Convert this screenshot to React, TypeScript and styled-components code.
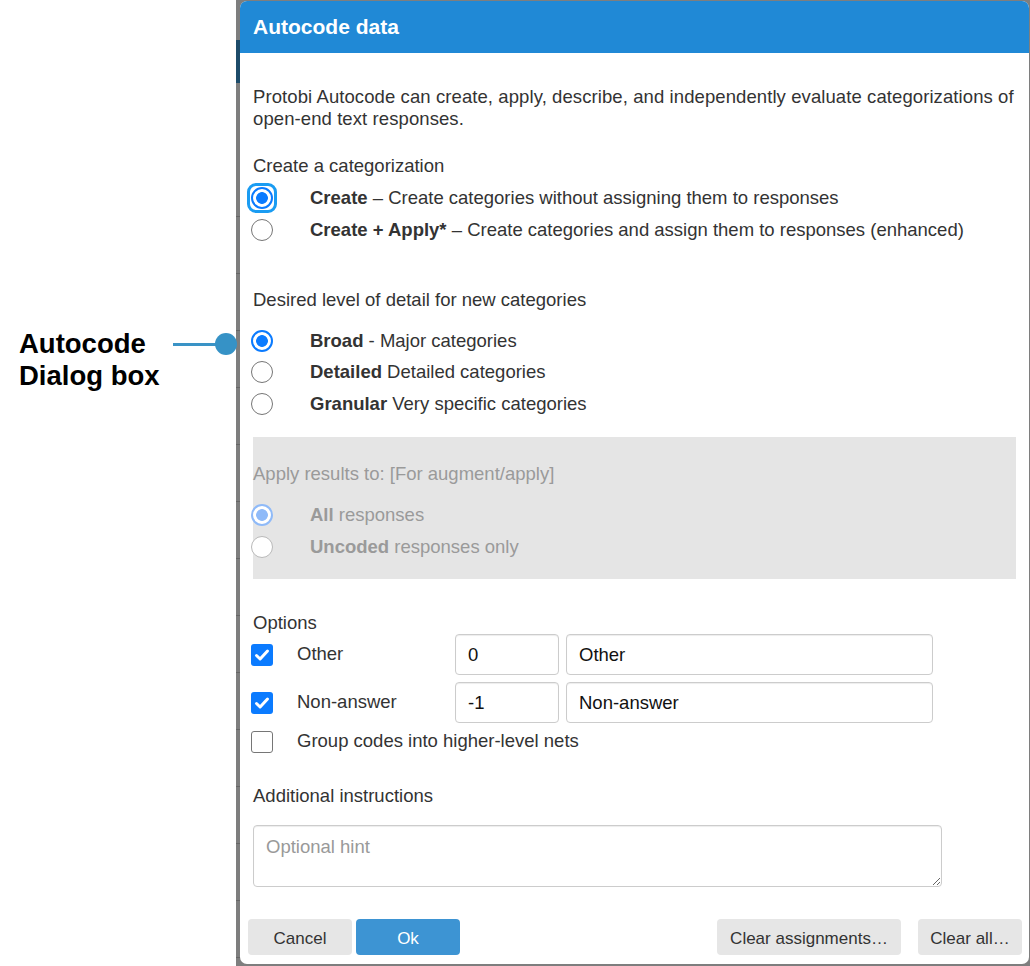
import React from 'react'
import styled, { createGlobalStyle, css } from 'styled-components'

const GlobalStyle = createGlobalStyle`
  html, body {
    margin: 0;
    padding: 0;
    background: #fff;
  }
  body {
    font-family: "Liberation Sans", Arial, Helvetica, sans-serif;
    color: #333;
  }
`

const blue = '#0b7bff'
const paleBlue = '#8fbaf8'

const Page = styled.div`
  display: flex;
  width: 1030px;
  height: 966px;
  overflow: hidden;
`

const AnnotationColumn = styled.div`
  position: relative;
  z-index: 2;
  flex: none;
  width: 236px;
  padding: 328px 0 0 19px;
  box-sizing: border-box;
`

const Callout = styled.div`
  display: flex;
  align-items: flex-start;
`

const CalloutText = styled.div`
  width: 154px;
  flex: none;
  font-size: 27.5px;
  line-height: 32px;
  font-weight: 700;
  color: #000;
`

const Leader = styled.div`
  display: flex;
  align-items: center;
  height: 32px;
`

const LeaderLine = styled.span`
  width: 45px;
  height: 3px;
  background: #3a93c6;
`

const LeaderDot = styled.span`
  width: 22px;
  height: 22px;
  margin-left: -3px;
  border-radius: 50%;
  background: #3692c6;
`

/* the app behind the modal, dimmed */
const Backdrop = styled.div`
  flex: 1;
  display: flex;
  padding: 1px 1px 0 4px;
  background:
    linear-gradient(#1d4c6a, #1d4c6a) 0 40px / 4px 43px no-repeat,
    repeating-linear-gradient(
      to bottom,
      transparent 0 56px,
      #666 56px 57px
    ) 0 160px / 4px 100% no-repeat,
    #7e7e7e;
`

const Dialog = styled.div`
  width: 789px;
  height: 963px;
  display: flex;
  flex-direction: column;
  background: #fff;
  border-radius: 7px;
  overflow: hidden;
`

const Header = styled.div`
  height: 52px;
  flex: none;
  display: flex;
  align-items: center;
  padding: 0 13px;
  background: #2089d6;
  color: #fff;
  font-size: 21px;
  font-weight: 700;
`

const Body = styled.div`
  padding: 33px 13px 0;
  font-size: 18.5px;
  line-height: 22px;
`

const Intro = styled.p`
  margin: 0;
  letter-spacing: 0.09px;
`

const SectionTitle = styled.div<{ $top: number }>`
  margin-top: ${(p) => p.$top}px;
`

const RadioList = styled.div<{ $top: number; $row: number }>`
  margin-top: ${(p) => p.$top}px;
  display: flex;
  flex-direction: column;
  & > * {
    height: ${(p) => p.$row}px;
  }
`

const RadioRow = styled.label`
  display: flex;
  align-items: center;
`

const RadioMark = styled.span<{ $checked?: boolean; $disabled?: boolean; $focus?: boolean }>`
  position: relative;
  flex: none;
  box-sizing: border-box;
  width: 22px;
  height: 22px;
  margin-left: -2px;
  border-radius: 50%;
  ${(p) => {
    const c = p.$disabled ? paleBlue : blue
    return p.$checked
      ? css`
          border: 2px solid ${c};
          background: radial-gradient(circle, ${c} 0 5.5px, #fff 6.2px);
        `
      : css`
          border: 1.5px solid ${p.$disabled ? '#b9b9b9' : '#767676'};
          background: #fff;
        `
  }}
  ${(p) =>
    p.$focus &&
    css`
      &::after {
        content: '';
        position: absolute;
        inset: -6px;
        border: 3px solid #1a9cf2;
        border-radius: 9px;
      }
    `}
`

const RadioText = styled.span<{ $disabled?: boolean }>`
  margin-left: 37px;
  color: ${(p) => (p.$disabled ? '#9a9a9a' : '#333')};
  b {
    font-weight: 700;
  }
`

const DisabledPanel = styled.div`
  margin-top: 17.5px;
  height: 142px;
  box-sizing: border-box;
  padding-top: 26px;
  background: #e5e5e5;
  color: #9a9a9a;
`

const OptionRows = styled.div`
  display: flex;
  flex-direction: column;
  gap: 7px;
`

const OptionRow = styled.label`
  display: flex;
  align-items: center;
  min-height: 22px;
  &:last-child {
    margin-top: 1px;
  }
`

const CheckBox = styled.span<{ $checked?: boolean }>`
  flex: none;
  box-sizing: border-box;
  width: 22px;
  height: 22px;
  margin-left: -2px;
  border-radius: 3px;
  display: flex;
  align-items: center;
  justify-content: center;
  ${(p) =>
    p.$checked
      ? css`
          background: ${blue};
        `
      : css`
          border: 1.5px solid #767676;
          background: #fff;
        `}
`

const OptionLabel = styled.span<{ $wide?: boolean }>`
  margin-left: 24px;
  margin-top: -2px;
  width: ${(p) => (p.$wide ? 'auto' : '158px')};
  flex: none;
`

const TextField = styled.input<{ $w: number }>`
  box-sizing: border-box;
  width: ${(p) => p.$w}px;
  height: 41px;
  margin-right: 7px;
  padding: 0 12px;
  border: 1px solid #ccc;
  border-radius: 4px;
  box-shadow: inset 0 1px 1px rgba(0, 0, 0, 0.075);
  font: inherit;
  color: #111;
  background: #fff;
  outline: none;
`

const Hint = styled.textarea`
  display: block;
  box-sizing: border-box;
  width: 689px;
  height: 62px;
  margin-top: 18px;
  padding: 10px 12px;
  border: 1px solid #ccc;
  border-radius: 4px;
  box-shadow: inset 0 1px 1px rgba(0, 0, 0, 0.075);
  font: inherit;
  color: #333;
  resize: vertical;
  outline: none;
  &::placeholder {
    color: #999;
  }
`

const Footer = styled.div`
  display: flex;
  align-items: center;
  padding: 32px 7px 8px 8px;
`

const ButtonGroup = styled.div<{ $gap: number }>`
  display: flex;
  gap: ${(p) => p.$gap}px;
`

const Spacer = styled.div`
  flex: 1;
`

const Button = styled.button<{ $primary?: boolean; $w: number }>`
  width: ${(p) => p.$w}px;
  height: 36px;
  border: none;
  border-radius: 4px;
  font-family: inherit;
  font-size: 17px;
  color: ${(p) => (p.$primary ? '#fff' : '#333')};
  background: ${(p) => (p.$primary ? '#3d94d3' : '#e6e6e6')};
  padding: 3px 0 0;
`

const Check = () => (
  <svg width="16" height="16" viewBox="0 0 16 16" fill="none">
    <path d="M2.5 8.5l3.6 3.5L13.5 4" stroke="#fff" strokeWidth="3" strokeLinecap="round" strokeLinejoin="round" />
  </svg>
)

export default function App() {
  return (
    <>
      <GlobalStyle />
      <Page>
        <AnnotationColumn>
          <Callout>
            <CalloutText>
              Autocode
              <br />
              Dialog box
            </CalloutText>
            <Leader>
              <LeaderLine />
              <LeaderDot />
            </Leader>
          </Callout>
        </AnnotationColumn>

        <Backdrop>
          <Dialog>
            <Header>Autocode data</Header>
            <Body>
              <Intro>
                Protobi Autocode can create, apply, describe, and independently evaluate categorizations of
                open-end text responses.
              </Intro>

              <SectionTitle $top={25}>Create a categorization</SectionTitle>
              <RadioList $top={5} $row={32}>
                <RadioRow>
                  <RadioMark $checked $focus />
                  <RadioText>
                    <b>Create</b> – Create categories without assigning them to responses
                  </RadioText>
                </RadioRow>
                <RadioRow>
                  <RadioMark />
                  <RadioText>
                    <b>Create + Apply*</b> – Create categories and assign them to responses (enhanced)
                  </RadioText>
                </RadioRow>
              </RadioList>

              <SectionTitle $top={43}>Desired level of detail for new categories</SectionTitle>
              <RadioList $top={14} $row={31.5}>
                <RadioRow>
                  <RadioMark $checked />
                  <RadioText>
                    <b>Broad</b> - Major categories
                  </RadioText>
                </RadioRow>
                <RadioRow>
                  <RadioMark />
                  <RadioText>
                    <b>Detailed</b> Detailed categories
                  </RadioText>
                </RadioRow>
                <RadioRow>
                  <RadioMark />
                  <RadioText>
                    <b>Granular</b> Very specific categories
                  </RadioText>
                </RadioRow>
              </RadioList>

              <DisabledPanel>
                Apply results to: [For augment/apply]
                <RadioList $top={14} $row={32}>
                  <RadioRow>
                    <RadioMark $checked $disabled />
                    <RadioText $disabled>
                      <b>All</b> responses
                    </RadioText>
                  </RadioRow>
                  <RadioRow>
                    <RadioMark $disabled />
                    <RadioText $disabled>
                      <b>Uncoded</b> responses only
                    </RadioText>
                  </RadioRow>
                </RadioList>
              </DisabledPanel>

              <SectionTitle $top={33}>Options</SectionTitle>
              <OptionRows>
                <OptionRow>
                  <CheckBox $checked>
                    <Check />
                  </CheckBox>
                  <OptionLabel>Other</OptionLabel>
                  <TextField $w={104} defaultValue="0" />
                  <TextField $w={367} defaultValue="Other" />
                </OptionRow>
                <OptionRow>
                  <CheckBox $checked>
                    <Check />
                  </CheckBox>
                  <OptionLabel>Non-answer</OptionLabel>
                  <TextField $w={104} defaultValue="-1" />
                  <TextField $w={367} defaultValue="Non-answer" />
                </OptionRow>
                <OptionRow>
                  <CheckBox />
                  <OptionLabel $wide>Group codes into higher-level nets</OptionLabel>
                </OptionRow>
              </OptionRows>

              <SectionTitle $top={32}>Additional instructions</SectionTitle>
              <Hint placeholder="Optional hint" />
            </Body>

            <Footer>
              <ButtonGroup $gap={4}>
                <Button $w={104}>Cancel</Button>
                <Button $w={104} $primary>
                  Ok
                </Button>
              </ButtonGroup>
              <Spacer />
              <ButtonGroup $gap={17}>
                <Button $w={184}>Clear assignments…</Button>
                <Button $w={104}>Clear all…</Button>
              </ButtonGroup>
            </Footer>
          </Dialog>
        </Backdrop>
      </Page>
    </>
  )
}
